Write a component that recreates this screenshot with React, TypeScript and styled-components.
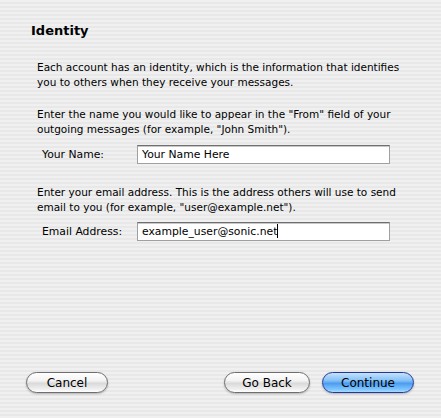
import styled, { createGlobalStyle } from "styled-components";

const GlobalStyle = createGlobalStyle`
  html, body {
    margin: 0;
    padding: 0;
  }
  body {
    font-family: "DejaVu Sans", "Liberation Sans", sans-serif;
    color: #000;
  }
`;

const Window = styled.div`
  width: 441px;
  height: 418px;
  box-sizing: border-box;
  display: flex;
  flex-direction: column;
  background: repeating-linear-gradient(
    to bottom,
    #f0f0f0 0px,
    #f0f0f0 2px,
    #e8e8e8 2px,
    #e8e8e8 4px
  );
  padding: 23px 0 0 0;
`;

const Title = styled.h1`
  margin: 0 0 0 31px;
  font-size: 13px;
  font-weight: bold;
  line-height: 16px;
`;

const Content = styled.div`
  display: flex;
  flex-direction: column;
  padding: 0 0 0 37px;
  margin-top: 21px;
  flex: 1;
`;

const Para = styled.p<{ $gap?: number }>`
  margin: ${(p) => p.$gap ?? 0}px 0 0 0;
  font-size: 10.5px;
  line-height: 15px;
  width: 380px;
`;

const FieldRow = styled.div<{ $top: number; $bottom: number }>`
  display: flex;
  align-items: center;
  margin: ${(p) => p.$top}px 0 ${(p) => p.$bottom}px 5px;
`;

const Label = styled.label`
  width: 95px;
  font-size: 10.8px;
`;

const Field = styled.div`
  box-sizing: border-box;
  width: 253px;
  height: 19px;
  background: #fff;
  border: 1px solid #a0a0a0;
  border-top-color: #6f6f6f;
  box-shadow: inset 0 1px 0 #c8c8c8;
  font-size: 10.8px;
  line-height: 17px;
  padding-left: 4px;
  white-space: nowrap;
`;

const Caret = styled.span`
  display: inline-block;
  width: 1px;
  height: 14px;
  background: #000;
  vertical-align: -3px;
`;

const Footer = styled.div`
  display: flex;
  align-items: center;
  padding: 0 27px 25px 26px;
  gap: 12px;
`;

const Spacer = styled.div`
  flex: 1;
`;

const PillButton = styled.button<{ $primary?: boolean; $w: number }>`
  box-sizing: border-box;
  width: ${(p) => p.$w}px;
  height: 21px;
  border-radius: 11px;
  font-family: "DejaVu Sans", "Liberation Sans", sans-serif;
  font-size: 12px;
  color: #000;
  padding: 0;
  border: 1px solid ${(p) => (p.$primary ? "#26379a" : "#6e6e6e")};
  background: ${(p) =>
    p.$primary
      ? "linear-gradient(to bottom, #c4e2fc 0%, #84c0f6 40%, #4d9cf0 55%, #7cc4ff 85%, #a8dbff 100%)"
      : "linear-gradient(to bottom, #ffffff 0%, #f3f3f3 40%, #dadada 55%, #f0f0f0 85%, #ffffff 100%)"};
  box-shadow: 0 1px 2px rgba(0, 0, 0, 0.25);
`;

export default function App() {
  return (
    <>
      <GlobalStyle />
      <Window>
        <Title>Identity</Title>
        <Content>
          <Para>
            Each account has an identity, which is the information that identifies
            you to others when they receive your messages.
          </Para>
          <Para $gap={17}>
            Enter the name you would like to appear in the "From" field of your
            outgoing messages (for example, "John Smith").
          </Para>
          <FieldRow $top={8} $bottom={21}>
            <Label>Your Name:</Label>
            <Field>Your Name Here</Field>
          </FieldRow>
          <Para>
            Enter your email address. This is the address others will use to send
            email to you (for example, "user@example.net").
          </Para>
          <FieldRow $top={7} $bottom={0}>
            <Label>Email Address:</Label>
            <Field>
              example_user@sonic.net
              <Caret />
            </Field>
          </FieldRow>
        </Content>
        <Footer>
          <PillButton $w={82}>Cancel</PillButton>
          <Spacer />
          <PillButton $w={86}>Go Back</PillButton>
          <PillButton $w={92} $primary>
            Continue
          </PillButton>
        </Footer>
      </Window>
    </>
  );
}
